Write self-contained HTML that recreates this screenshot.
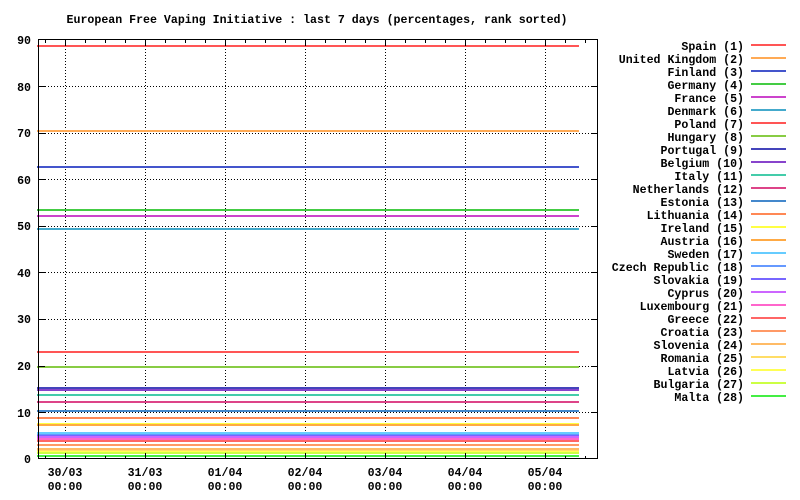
<!DOCTYPE html>
<html><head><meta charset="utf-8"><style>
html,body{margin:0;padding:0;background:#fff;width:800px;height:500px;overflow:hidden}
text{font-family:"Liberation Mono",monospace;font-weight:bold;font-size:11.6px;fill:#000}
</style></head><body>
<svg width="800" height="500" xmlns="http://www.w3.org/2000/svg" shape-rendering="crispEdges">
<text x="317" y="23" text-anchor="middle">European Free Vaping Initiative : last 7 days (percentages, rank sorted)</text>
<!-- grid -->
<g stroke="#000" stroke-width="1" stroke-dasharray="1,2">
<line x1="65.5" y1="40" x2="65.5" y2="459"/><line x1="145.5" y1="40" x2="145.5" y2="459"/>
<line x1="225.5" y1="40" x2="225.5" y2="459"/><line x1="305.5" y1="40" x2="305.5" y2="459"/>
<line x1="385.5" y1="40" x2="385.5" y2="459"/><line x1="465.5" y1="40" x2="465.5" y2="459"/>
<line x1="545.5" y1="40" x2="545.5" y2="459"/>
<line x1="39" y1="86.5" x2="598" y2="86.5"/><line x1="39" y1="133.5" x2="598" y2="133.5"/>
<line x1="39" y1="179.5" x2="598" y2="179.5"/><line x1="39" y1="226.5" x2="598" y2="226.5"/>
<line x1="39" y1="272.5" x2="598" y2="272.5"/><line x1="39" y1="319.5" x2="598" y2="319.5"/>
<line x1="39" y1="366.5" x2="598" y2="366.5"/><line x1="39" y1="412.5" x2="598" y2="412.5"/>
</g>
<!-- data lines -->
<g stroke-width="2">
<line x1="37" x2="579" y1="46" y2="46" stroke="#f55"/>
<line x1="37" x2="579" y1="131" y2="131" stroke="#fa5"/>
<line x1="37" x2="579" y1="167" y2="167" stroke="#45c"/>
<line x1="37" x2="579" y1="210" y2="210" stroke="#4c4"/>
<line x1="37" x2="579" y1="216" y2="216" stroke="#c4c"/>
<line x1="37" x2="579" y1="229" y2="229" stroke="#4ac"/>
<line x1="37" x2="579" y1="352" y2="352" stroke="#f55"/>
<line x1="37" x2="579" y1="367" y2="367" stroke="#8c4"/>
<line x1="37" x2="579" y1="388" y2="388" stroke="#44b"/>
<line x1="37" x2="579" y1="390" y2="390" stroke="#84c"/>
<line x1="37" x2="579" y1="395" y2="395" stroke="#4ca"/>
<line x1="37" x2="579" y1="402" y2="402" stroke="#d48"/>
<line x1="37" x2="579" y1="411" y2="411" stroke="#48c"/>
<line x1="37" x2="579" y1="418" y2="418" stroke="#f85"/>
<line x1="37" x2="579" y1="424" y2="424" stroke="#ff4"/>
<line x1="37" x2="579" y1="425" y2="425" stroke="#fa4"/>
<line x1="37" x2="579" y1="433" y2="433" stroke="#6cf"/>
<line x1="37" x2="579" y1="435" y2="435" stroke="#69f"/>
<line x1="37" x2="579" y1="436" y2="436" stroke="#76f"/>
<line x1="37" x2="579" y1="437" y2="437" stroke="#c6f"/>
<line x1="37" x2="579" y1="439" y2="439" stroke="#f6c"/>
<line x1="37" x2="579" y1="441" y2="441" stroke="#f66"/>
<line x1="37" x2="579" y1="445" y2="445" stroke="#f96"/>
<line x1="37" x2="579" y1="449" y2="449" stroke="#fb6"/>
<line x1="37" x2="579" y1="451" y2="451" stroke="#fd6"/>
<line x1="37" x2="579" y1="452" y2="452" stroke="#ff5"/>
<line x1="37" x2="579" y1="453" y2="453" stroke="#cf4"/>
<line x1="37" x2="579" y1="456" y2="456" stroke="#4e4"/>
</g>
<!-- frame -->
<rect x="38.5" y="39.5" width="559" height="419" fill="none" stroke="#000" stroke-width="1"/>
<g stroke="#000" stroke-width="1">
<path d="M45.5 459v-3M85.5 459v-3M105.5 459v-3M125.5 459v-3M165.5 459v-3M185.5 459v-3M205.5 459v-3M245.5 459v-3M265.5 459v-3M285.5 459v-3M325.5 459v-3M345.5 459v-3M365.5 459v-3M405.5 459v-3M425.5 459v-3M445.5 459v-3M485.5 459v-3M505.5 459v-3M525.5 459v-3M565.5 459v-3M585.5 459v-3"/>
<path d="M45.5 40v3M85.5 40v3M105.5 40v3M125.5 40v3M165.5 40v3M185.5 40v3M205.5 40v3M245.5 40v3M265.5 40v3M285.5 40v3M325.5 40v3M345.5 40v3M365.5 40v3M405.5 40v3M425.5 40v3M445.5 40v3M485.5 40v3M505.5 40v3M525.5 40v3M565.5 40v3M585.5 40v3"/>
<path d="M65.5 459v-6M145.5 459v-6M225.5 459v-6M305.5 459v-6M385.5 459v-6M465.5 459v-6M545.5 459v-6"/>
<path d="M65.5 40v6M145.5 40v6M225.5 40v6M305.5 40v6M385.5 40v6M465.5 40v6M545.5 40v6"/>
<path d="M39 86.5h6M39 133.5h6M39 179.5h6M39 226.5h6M39 272.5h6M39 319.5h6M39 366.5h6M39 412.5h6"/>
<path d="M598 86.5h-6M598 133.5h-6M598 179.5h-6M598 226.5h-6M598 272.5h-6M598 319.5h-6M598 366.5h-6M598 412.5h-6"/>
</g>
<g text-anchor="end">
<text x="31" y="44">90</text><text x="31" y="91">80</text><text x="31" y="137">70</text>
<text x="31" y="184">60</text><text x="31" y="230">50</text><text x="31" y="277">40</text>
<text x="31" y="323">30</text><text x="31" y="370">20</text><text x="31" y="417">10</text>
<text x="31" y="463">0</text>
</g>
<g text-anchor="middle">
<text x="65" y="476">30/03</text><text x="65" y="490">00:00</text>
<text x="145" y="476">31/03</text><text x="145" y="490">00:00</text>
<text x="225" y="476">01/04</text><text x="225" y="490">00:00</text>
<text x="305" y="476">02/04</text><text x="305" y="490">00:00</text>
<text x="385" y="476">03/04</text><text x="385" y="490">00:00</text>
<text x="465" y="476">04/04</text><text x="465" y="490">00:00</text>
<text x="545" y="476">05/04</text><text x="545" y="490">00:00</text>
</g>
<!-- legend -->
<g text-anchor="end">
<text x="744" y="50">Spain (1)</text>
<text x="744" y="63">United Kingdom (2)</text>
<text x="744" y="76">Finland (3)</text>
<text x="744" y="89">Germany (4)</text>
<text x="744" y="102">France (5)</text>
<text x="744" y="115">Denmark (6)</text>
<text x="744" y="128">Poland (7)</text>
<text x="744" y="141">Hungary (8)</text>
<text x="744" y="154">Portugal (9)</text>
<text x="744" y="167">Belgium (10)</text>
<text x="744" y="180">Italy (11)</text>
<text x="744" y="193">Netherlands (12)</text>
<text x="744" y="206">Estonia (13)</text>
<text x="744" y="219">Lithuania (14)</text>
<text x="744" y="232">Ireland (15)</text>
<text x="744" y="245">Austria (16)</text>
<text x="744" y="258">Sweden (17)</text>
<text x="744" y="271">Czech Republic (18)</text>
<text x="744" y="284">Slovakia (19)</text>
<text x="744" y="297">Cyprus (20)</text>
<text x="744" y="310">Luxembourg (21)</text>
<text x="744" y="323">Greece (22)</text>
<text x="744" y="336">Croatia (23)</text>
<text x="744" y="349">Slovenia (24)</text>
<text x="744" y="362">Romania (25)</text>
<text x="744" y="375">Latvia (26)</text>
<text x="744" y="388">Bulgaria (27)</text>
<text x="744" y="401">Malta (28)</text>
</g>
<g stroke-width="2">
<line x1="751" x2="786" y1="45" y2="45" stroke="#f55"/>
<line x1="751" x2="786" y1="58" y2="58" stroke="#fa5"/>
<line x1="751" x2="786" y1="71" y2="71" stroke="#45c"/>
<line x1="751" x2="786" y1="84" y2="84" stroke="#4c4"/>
<line x1="751" x2="786" y1="97" y2="97" stroke="#c4c"/>
<line x1="751" x2="786" y1="110" y2="110" stroke="#4ac"/>
<line x1="751" x2="786" y1="123" y2="123" stroke="#f55"/>
<line x1="751" x2="786" y1="136" y2="136" stroke="#8c4"/>
<line x1="751" x2="786" y1="149" y2="149" stroke="#44b"/>
<line x1="751" x2="786" y1="162" y2="162" stroke="#84c"/>
<line x1="751" x2="786" y1="175" y2="175" stroke="#4ca"/>
<line x1="751" x2="786" y1="188" y2="188" stroke="#d48"/>
<line x1="751" x2="786" y1="201" y2="201" stroke="#48c"/>
<line x1="751" x2="786" y1="214" y2="214" stroke="#f85"/>
<line x1="751" x2="786" y1="227" y2="227" stroke="#ff4"/>
<line x1="751" x2="786" y1="240" y2="240" stroke="#fa4"/>
<line x1="751" x2="786" y1="253" y2="253" stroke="#6cf"/>
<line x1="751" x2="786" y1="266" y2="266" stroke="#69f"/>
<line x1="751" x2="786" y1="279" y2="279" stroke="#76f"/>
<line x1="751" x2="786" y1="292" y2="292" stroke="#c6f"/>
<line x1="751" x2="786" y1="305" y2="305" stroke="#f6c"/>
<line x1="751" x2="786" y1="318" y2="318" stroke="#f66"/>
<line x1="751" x2="786" y1="331" y2="331" stroke="#f96"/>
<line x1="751" x2="786" y1="344" y2="344" stroke="#fb6"/>
<line x1="751" x2="786" y1="357" y2="357" stroke="#fd6"/>
<line x1="751" x2="786" y1="370" y2="370" stroke="#ff5"/>
<line x1="751" x2="786" y1="383" y2="383" stroke="#cf4"/>
<line x1="751" x2="786" y1="396" y2="396" stroke="#4e4"/>
</g>
</svg>
</body></html>
